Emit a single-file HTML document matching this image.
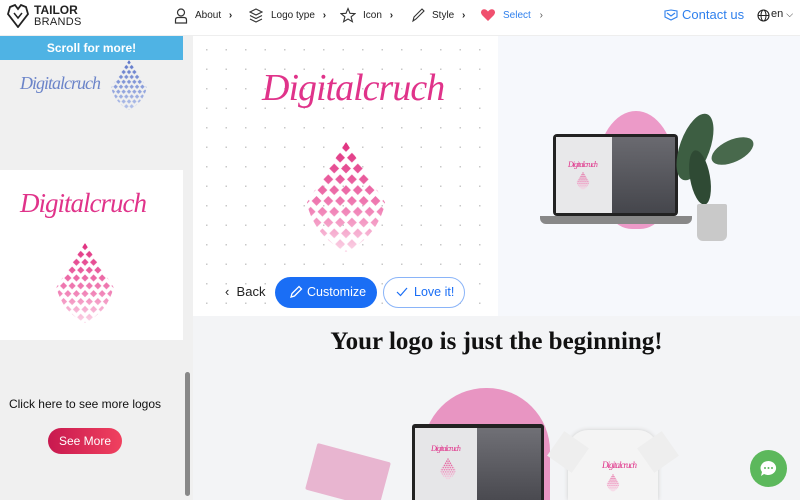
<!DOCTYPE html>
<html><head><meta charset="utf-8"><style>
*{margin:0;padding:0;box-sizing:border-box}
html{width:800px;height:500px;overflow:hidden}
body{width:800px;height:500px;overflow:hidden;font-family:"Liberation Sans",sans-serif;background:#fff;position:relative}
.abs{position:absolute}
.nav{font-size:10px;color:#222;top:10px}
.script{font-family:"Liberation Serif",serif;font-style:italic;color:#e0338a;letter-spacing:-1px;white-space:nowrap}
</style></head><body>
<svg width="0" height="0" style="position:absolute">
<defs>
<pattern id="pat" width="12" height="22" patternUnits="userSpaceOnUse" x="34" y="0">
<polygon points="6,0 11,5 6,10 1,5" fill="#fff"/>
<polygon points="12,11 17,16 12,21 7,16" fill="#fff"/>
<polygon points="0,11 5,16 0,21 -5,16" fill="#fff"/>
</pattern>
<clipPath id="lc"><path d="M40,0 L80,62 Q72,96 40,112 Q8,96 0,62 Z"/></clipPath>
<mask id="lm" maskUnits="userSpaceOnUse" x="0" y="0" width="80" height="112"><rect width="80" height="112" fill="url(#pat)" clip-path="url(#lc)"/></mask>
<linearGradient id="pg" x1="0" y1="0" x2="0" y2="1"><stop offset="0" stop-color="#e0307f"/><stop offset=".6" stop-color="#f080b5"/><stop offset="1" stop-color="#fbd4e6"/></linearGradient>
<linearGradient id="bg" x1="0" y1="0" x2="0" y2="1"><stop offset="0" stop-color="#5a73c8"/><stop offset="1" stop-color="#b5c3ea"/></linearGradient>
<symbol id="leaf" viewBox="0 0 80 112"><rect width="80" height="112" fill="url(#pg)" mask="url(#lm)"/></symbol>
<symbol id="leafb" viewBox="0 0 80 112"><rect width="80" height="112" fill="url(#bg)" mask="url(#lm)"/></symbol>
</defs></svg>

<!-- header -->
<div class="abs" style="left:0;top:0;width:800px;height:36px;background:#fff;border-bottom:1px solid #eee"></div>
<svg class="abs" style="left:7px;top:4px" width="22" height="24" viewBox="0 0 22 24"><path d="M3,3 L8,1 L11,5 L14,1 L19,3 L21,10 L11,23 L1,10 Z" fill="none" stroke="#222" stroke-width="1.8"/><path d="M7,9 L11,14 L15,9" fill="none" stroke="#222" stroke-width="1.5"/></svg>
<div class="abs" style="left:34px;top:4px;font-size:12px;font-weight:bold;color:#222;line-height:12px">TAILOR</div>
<div class="abs" style="left:34px;top:16px;font-size:11px;color:#222;line-height:12px;letter-spacing:.3px">BRANDS</div>
<svg class="abs" style="left:174px;top:8px" width="14" height="16"><circle cx="7" cy="4.5" r="3.5" fill="none" stroke="#333" stroke-width="1.2"/><path d="M1.5,15 V12 Q1.5,9.5 4,9.5 H10 Q12.5,9.5 12.5,12 V15 Z" fill="none" stroke="#333" stroke-width="1.2"/></svg>
<div class="abs nav" style="left:195px">About <b style="margin-left:5px">›</b></div>
<svg class="abs" style="left:249px;top:8px" width="14" height="16"><path d="M7,1 L13,4 L7,7 L1,4 Z M1,7.5 L7,10.5 L13,7.5 M1,11 L7,14 L13,11" fill="none" stroke="#333" stroke-width="1.1"/></svg>
<div class="abs nav" style="left:271px">Logo type <b style="margin-left:5px">›</b></div>
<svg class="abs" style="left:340px;top:7px" width="16" height="16"><path d="M8,1.5 L10,6.3 L15,6.6 L11.1,9.8 L12.4,14.7 L8,12 L3.6,14.7 L4.9,9.8 L1,6.6 L6,6.3 Z" fill="none" stroke="#333" stroke-width="1.1"/></svg>
<div class="abs nav" style="left:363px">Icon <b style="margin-left:5px">›</b></div>
<svg class="abs" style="left:410px;top:7px" width="16" height="16"><path d="M3,14 L4,10 L12,2 L14,4 L6,12 Z" fill="none" stroke="#333" stroke-width="1.1"/></svg>
<div class="abs nav" style="left:432px">Style <b style="margin-left:5px">›</b></div>
<svg class="abs" style="left:480px;top:8px" width="16" height="14"><path d="M8,13 L2,7 Q0,4 2,2 Q5,0 8,3.5 Q11,0 14,2 Q16,4 14,7 Z" fill="#f0506e"/></svg>
<div class="abs nav" style="left:503px;color:#2f80ed">Select <span style="margin-left:6px;color:#555">›</span></div>
<svg class="abs" style="left:664px;top:9px" width="14" height="12"><path d="M1,2 L7,1 L13,2 L13,8 L7,11 L1,8 Z M3,4 L7,7 L11,4" fill="none" stroke="#2f80ed" stroke-width="1.1"/></svg>
<div class="abs" style="left:682px;top:7px;font-size:13px;color:#2f80ed">Contact us</div>
<svg class="abs" style="left:757px;top:9px" width="13" height="13"><circle cx="6.5" cy="6.5" r="5.5" fill="none" stroke="#222" stroke-width="1.1"/><ellipse cx="6.5" cy="6.5" rx="2.5" ry="5.5" fill="none" stroke="#222" stroke-width="1"/><path d="M1,6.5 H12" stroke="#222"/></svg>
<div class="abs" style="left:771px;top:8px;font-size:11px;color:#222">en <span style="font-size:9px">⌵</span></div>

<!-- sidebar -->
<div class="abs" style="left:0;top:36px;width:193px;height:464px;background:#f0f0f0"></div>
<div class="abs" style="left:0;top:36px;width:193px;height:24px;background:#4fb3e4;color:#fff;font-size:12px;font-weight:bold;text-align:center;line-height:24px;padding-right:10px">Scroll for more!</div>
<div class="abs" style="left:184px;top:38px;width:0;height:0;border-left:4px solid transparent;border-right:4px solid transparent;border-bottom:6px solid #3a8fc0"></div>
<div class="abs script" style="left:20px;top:73px;font-size:18px;color:#6b84c9">Digitalcruch</div>
<svg class="abs" style="left:108px;top:60px" width="42" height="50"><use href="#leafb"/></svg>
<div class="abs" style="left:0;top:170px;width:183px;height:170px;background:#fff"></div>
<div class="abs script" style="left:20px;top:188px;font-size:27px">Digitalcruch</div>
<svg class="abs" style="left:50px;top:243px" width="70" height="80"><use href="#leaf"/></svg>
<div class="abs" style="left:0;top:397px;width:170px;text-align:center;font-size:12px;color:#111">Click here to see more logos</div>
<div class="abs" style="left:48px;top:428px;width:74px;height:26px;border-radius:13px;background:linear-gradient(90deg,#c8194f,#f0415f);color:#fff;font-size:12px;text-align:center;line-height:26px">See More</div>
<div class="abs" style="left:183px;top:36px;width:10px;height:464px;background:#f0f0f0"></div>
<div class="abs" style="left:185px;top:372px;width:5px;height:124px;border-radius:3px;background:#888"></div>

<!-- main top -->
<div class="abs" style="left:193px;top:36px;width:305px;height:280px;background-color:#fff;background-image:radial-gradient(circle,#c8c8c8 0.8px,transparent 1px);background-size:19.5px 19.5px;background-position:4px 4px"></div>
<div class="abs script" style="left:262px;top:66px;font-size:38px">Digitalcruch</div>
<svg class="abs" style="left:306px;top:142px" width="80" height="110"><use href="#leaf"/></svg>
<div class="abs" style="left:225px;top:284px;font-size:13px;color:#222">‹&nbsp; Back</div>
<div class="abs" style="left:275px;top:277px;width:102px;height:31px;border-radius:16px;background:#1a6ef5;color:#fff;font-size:12.5px;line-height:31px;padding-left:32px">Customize</div>
<svg class="abs" style="left:289px;top:285px" width="14" height="14"><path d="M2,12 L3,8.5 L10,1.5 L12.5,4 L5.5,11 Z" fill="none" stroke="#fff" stroke-width="1.3"/></svg>
<div class="abs" style="left:383px;top:277px;width:82px;height:31px;border-radius:16px;border:1px solid #8ab4f8;background:#fff;color:#1a6ef5;font-size:12.5px;line-height:29px;padding-left:30px">Love it!</div>
<svg class="abs" style="left:396px;top:286px" width="12" height="12"><path d="M1,6 L4.5,9.5 L11,2" fill="none" stroke="#1a6ef5" stroke-width="1.2"/></svg>

<div class="abs" style="left:498px;top:36px;width:302px;height:280px;background:#f6f8fc"></div>
<div class="abs" style="left:597px;top:111px;width:78px;height:118px;border-radius:50% 50% 45% 45%;background:#ec9ac8"></div>
<div class="abs" style="left:553px;top:134px;width:125px;height:82px;background:#222;border-radius:4px"></div>
<div class="abs" style="left:556px;top:137px;width:56px;height:76px;background:#e8e8ea"></div>
<div class="abs" style="left:612px;top:137px;width:63px;height:76px;background:linear-gradient(#6a6a70,#45464c)"></div>
<div class="abs script" style="left:568px;top:160px;font-size:8px">Digitalcruch</div>
<svg class="abs" style="left:576px;top:172px" width="14" height="18"><use href="#leaf"/></svg>
<div class="abs" style="left:540px;top:216px;width:152px;height:8px;background:#888;border-radius:0 0 6px 6px"></div>
<div class="abs" style="left:680px;top:112px;width:30px;height:70px;border-radius:50%;background:#3d5e42;transform:rotate(20deg)"></div>
<div class="abs" style="left:710px;top:140px;width:45px;height:22px;border-radius:50%;background:#48694c;transform:rotate(-25deg)"></div>
<div class="abs" style="left:690px;top:150px;width:20px;height:55px;border-radius:50%;background:#2f4a34;transform:rotate(-10deg)"></div>
<div class="abs" style="left:697px;top:204px;width:30px;height:37px;background:#c9c9c9;border-radius:2px 2px 6px 6px"></div>

<!-- lower section -->
<div class="abs" style="left:193px;top:316px;width:607px;height:184px;background:#f3f4f6"></div>
<div class="abs" style="left:193px;top:328px;width:607px;text-align:center;font-family:'Liberation Serif',serif;font-weight:bold;font-size:25px;color:#111">Your logo is just the beginning!</div>
<div class="abs" style="left:423px;top:388px;width:127px;height:112px;border-radius:63px 63px 0 0;background:#e895c2"></div>
<div class="abs" style="left:310px;top:452px;width:76px;height:48px;background:#e8b5d0;transform:rotate(15deg);border-radius:2px"></div>
<div class="abs" style="left:412px;top:424px;width:132px;height:76px;background:#222;border-radius:3px 3px 0 0"></div>
<div class="abs" style="left:415px;top:428px;width:62px;height:72px;background:#e6e6e8"></div>
<div class="abs" style="left:477px;top:428px;width:64px;height:72px;background:linear-gradient(#707076,#4a4a50)"></div>
<div class="abs script" style="left:431px;top:444px;font-size:8px">Digitalcruch</div>
<svg class="abs" style="left:440px;top:458px" width="16" height="22"><use href="#leaf"/></svg>
<div class="abs" style="left:568px;top:430px;width:90px;height:70px;background:#f4f4f4;border-radius:20px 20px 0 0;box-shadow:0 0 4px #ccc"></div>
<div class="abs" style="left:553px;top:437px;width:30px;height:30px;background:#eee;transform:rotate(35deg)"></div>
<div class="abs" style="left:643px;top:437px;width:30px;height:30px;background:#eee;transform:rotate(-35deg)"></div>
<div class="abs script" style="left:602px;top:460px;font-size:9px">Digitalcruch</div>
<svg class="abs" style="left:606px;top:474px" width="14" height="18"><use href="#leaf"/></svg>
<div class="abs" style="left:750px;top:450px;width:37px;height:37px;border-radius:50%;background:#5cb85c"></div>
<svg class="abs" style="left:759px;top:460px" width="19" height="18"><path d="M9.5,1 A8,7 0 1 1 5,14 L2,16 L3,12 A8,7 0 0 1 9.5,1 Z" fill="#fff"/><circle cx="6" cy="8" r="1" fill="#5cb85c"/><circle cx="9.5" cy="8" r="1" fill="#5cb85c"/><circle cx="13" cy="8" r="1" fill="#5cb85c"/></svg>
</body></html>
